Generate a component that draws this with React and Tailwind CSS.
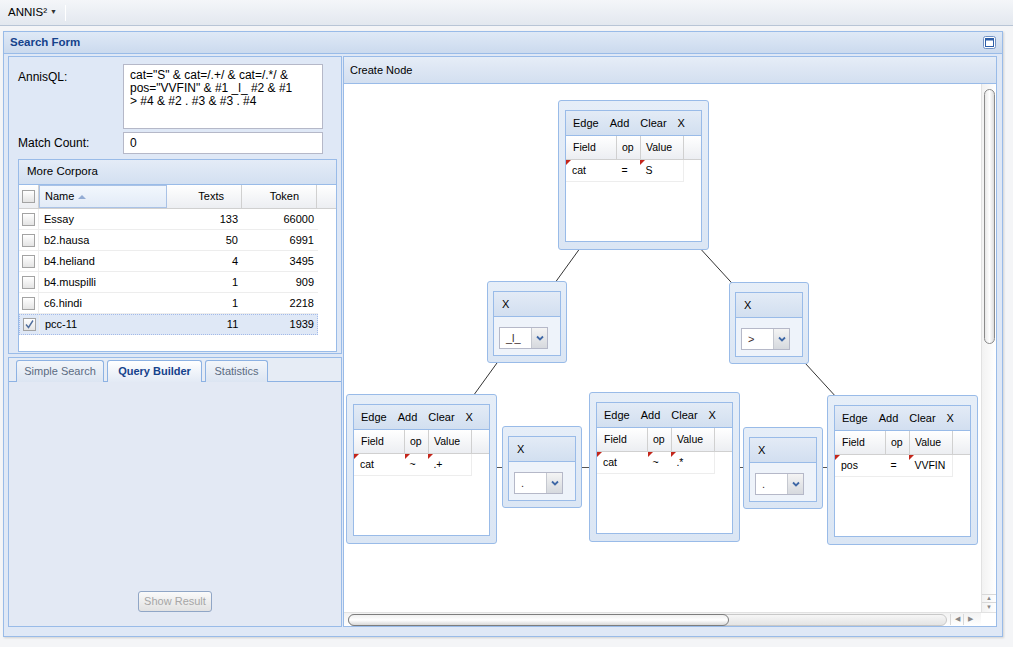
import React from 'react'

const corpora = [
  { name: 'Essay', texts: 133, token: 66000 },
  { name: 'b2.hausa', texts: 50, token: 6991 },
  { name: 'b4.heliand', texts: 4, token: 3495 },
  { name: 'b4.muspilli', texts: 1, token: 909 },
  { name: 'c6.hindi', texts: 1, token: 2218 },
  { name: 'pcc-11', texts: 11, token: 1939, checked: true },
]

const nodes = [
  { pos: 'left-[214px] top-[16px]', cells: [['cat', true], ['=', false], ['S', true]] },
  { pos: 'left-[2px] top-[310px]', cells: [['cat', true], ['~', true], ['.+', true]] },
  { pos: 'left-[245px] top-[308px]', cells: [['cat', true], ['~', true], ['.*', true]] },
  { pos: 'left-[483px] top-[311px]', cells: [['pos', true], ['=', false], ['VVFIN', true]] },
]

const edges = [
  { pos: 'left-[143px] top-[197px]', op: '_l_' },
  { pos: 'left-[385px] top-[198px]', op: '>' },
  { pos: 'left-[158px] top-[342px]', op: '.' },
  { pos: 'left-[399px] top-[343px]', op: '.' },
]

function Checkbox({ checked }) {
  return (
    <span className="w-[13px] h-[13px] border border-[#a3a3a3] bg-gradient-to-b from-white to-[#e4e4e4] flex items-center justify-center">
      {checked && (
        <svg width="9" height="9" viewBox="0 0 9 9">
          <path d="M1 4.5 L3.5 7.5 L8 0.5" stroke="#4f6d9c" strokeWidth="1.4" fill="none" />
        </svg>
      )}
    </span>
  )
}

function Dirty() {
  return <span className="absolute left-0 top-0 w-0 h-0 border-t-[5px] border-t-[#c4261b] border-r-[5px] border-r-transparent" />
}

function QueryNode({ pos, cells }) {
  const widths = ['w-[51px]', 'w-[24px]', 'w-[43px]']
  const pads = ['pl-[6px]', 'pl-[5px]', 'pl-[5px]']
  return (
    <div className={`absolute ${pos} w-[151px] h-[150px] rounded-[3px] border border-[#99bbe8] bg-gradient-to-b from-[#e6eef8] to-[#dbe6f4] pt-[9px] px-[6px] pb-[7px]`}>
      <div className="h-full border border-[#99bbe8] bg-white flex flex-col text-[11px]">
        <div className="h-[25px] shrink-0 border-b border-[#99bbe8] bg-gradient-to-b from-[#e3ebf6] to-[#d2dff0] flex items-center gap-[11px] pl-[7px]">
          <span>Edge</span>
          <span>Add</span>
          <span>Clear</span>
          <span>X</span>
        </div>
        <div className="h-[24px] shrink-0 flex border-b border-[#d0d0d0] bg-gradient-to-b from-white to-[#eceef2] text-[10.5px]">
          <div className="w-[51px] border-r border-[#d0d0d0] pl-[7px] flex items-center">Field</div>
          <div className="w-[24px] border-r border-[#d0d0d0] pl-[5px] flex items-center">op</div>
          <div className="w-[43px] border-r border-[#d0d0d0] pl-[5px] flex items-center">Value</div>
          <div className="flex-1" />
        </div>
        <div className="h-[22px] shrink-0 flex w-[118px] border-b border-r border-[#ededed] text-[10.5px]">
          {cells.map(([text, dirty], i) => (
            <div key={i} className={`relative ${widths[i]} ${pads[i]} flex items-center`}>
              {dirty && <Dirty />}
              {text}
            </div>
          ))}
        </div>
      </div>
    </div>
  )
}

function EdgeNode({ pos, op }) {
  return (
    <div className={`absolute ${pos} w-[80px] h-[82px] rounded-[3px] border border-[#99bbe8] bg-gradient-to-b from-[#e6eef8] to-[#dbe6f4] pt-[9px] pl-[5px] pr-[5px] pb-[6px]`}>
      <div className="h-full border border-[#99bbe8] flex flex-col bg-[#eef3fa]">
        <div className="h-[25px] shrink-0 border-b border-[#99bbe8] bg-gradient-to-b from-[#e3ebf6] to-[#d2dff0] flex items-center pl-[8px] text-[11px]">X</div>
        <div className="pt-[10px] pl-[5px]">
          <div className="flex w-[49px] h-[22px] border border-[#b5b8c8]">
            <div className="flex-1 bg-white text-[11px] pl-[6px] flex items-center text-[#3a2a2a]">{op}</div>
            <div className="w-[16px] border-l border-[#c5c8d0] bg-gradient-to-b from-[#f4f4f4] to-[#d6d9de] flex items-center justify-center">
              <svg width="8" height="6" viewBox="0 0 8 6">
                <path d="M1 1.5 L4 4.5 L7 1.5" stroke="#3f68a6" strokeWidth="1.8" fill="none" />
              </svg>
            </div>
          </div>
        </div>
      </div>
    </div>
  )
}

function SearchFormLeft() {
  return (
    <div className="w-[334px] flex flex-col">
      <div className="h-[298px] shrink-0 border border-[#99bbe8] bg-[#dfe8f6] pt-[7px] pl-[9px] pr-[4px] text-[12px]">
        <div className="flex">
          <div className="w-[105px] pt-[4px]">AnnisQL:</div>
          <div className="w-[200px] h-[65px] border border-[#b5b8c8] bg-white px-[6px] pt-[4px] leading-[13px] text-[12px]">
            <div>cat="S" &amp; cat=/.+/ &amp; cat=/.*/ &amp;</div>
            <div>pos="VVFIN" &amp; #1 _l_ #2 &amp; #1</div>
            <div>&gt; #4 &amp; #2 . #3 &amp; #3 . #4</div>
          </div>
        </div>
        <div className="flex mt-[3px]">
          <div className="w-[105px] flex items-center">Match Count:</div>
          <div className="w-[200px] h-[22px] border border-[#b5b8c8] bg-white px-[6px] flex items-center">0</div>
        </div>
        <div className="mt-[5px] h-[193px] border border-[#99bbe8] bg-white flex flex-col text-[11px]">
          <div className="h-[25px] shrink-0 border-b border-[#99bbe8] bg-gradient-to-b from-[#e4ecf7] to-[#d3e0f1] flex items-center pl-[8px] text-[11.5px]">More Corpora</div>
          <div className="h-[24px] shrink-0 flex border-b border-[#d0d0d0] bg-gradient-to-b from-white to-[#eceef2]">
            <div className="w-[20px] border-r border-[#d0d0d0] flex items-center justify-center">
              <Checkbox />
            </div>
            <div className="w-[128px] border border-[#a9c2e6] bg-gradient-to-b from-[#f2f7fd] to-[#e2ebf7] flex items-center pl-[5px] gap-[4px]">
              Name
              <svg width="8" height="5" viewBox="0 0 8 5"><path d="M0 5 L4 1 L8 5 Z" fill="#93acd4" /></svg>
            </div>
            <div className="w-[75px] border-r border-[#d0d0d0] flex items-center justify-end pr-[17px]">Texts</div>
            <div className="w-[75px] border-r border-[#d0d0d0] flex items-center justify-end pr-[17px]">Token</div>
            <div className="flex-1" />
          </div>
          {corpora.map((c) => (
            <div
              key={c.name}
              className={`h-[21px] w-[299px] flex ${c.checked ? 'bg-[#dfe8f6] border border-dotted border-[#a3bae9]' : 'border-b border-[#ededed]'}`}
            >
              <div className="w-[20px] border-r border-[#ededed] flex items-center justify-center">
                <Checkbox checked={c.checked} />
              </div>
              <div className="w-[128px] pl-[5px] flex items-center">{c.name}</div>
              <div className="w-[75px] pr-[4px] flex items-center justify-end">{c.texts}</div>
              <div className="w-[75px] pr-[3px] flex items-center justify-end">{c.token}</div>
            </div>
          ))}
        </div>
      </div>
      <div className="h-[3px] shrink-0" />
      <div className="flex-1 border border-[#99bbe8] flex flex-col">
        <div className="h-[24px] shrink-0 pt-[2px] pl-[7px] flex gap-[3px] border-b border-[#8db2e3] bg-[#e6ecf5] text-[11px]">
          <div className="w-[88px] h-[22px] rounded-t-[3px] border border-b-0 border-[#8db2e3] bg-gradient-to-b from-[#f3f6fa] to-[#dce5f2] flex items-center justify-center text-[#5b6b82]">Simple Search</div>
          <div className="w-[95px] h-[22px] rounded-t-[3px] border border-b-0 border-[#8db2e3] bg-gradient-to-b from-white to-[#e3eaf5] flex items-center justify-center font-bold text-[#15428b]">Query Builder</div>
          <div className="w-[63px] h-[22px] rounded-t-[3px] border border-b-0 border-[#8db2e3] bg-gradient-to-b from-[#f3f6fa] to-[#dce5f2] flex items-center justify-center text-[#5b6b82]">Statistics</div>
        </div>
        <div className="flex-1 bg-[#e3e9f4] flex items-end justify-center pb-[14px]">
          <div className="w-[74px] h-[21px] rounded-[3px] border border-[#90a6c6] bg-gradient-to-b from-[#fafafa] to-[#e2e2e2] flex items-center justify-center text-[11px] text-[#a6a6a6]">Show Result</div>
        </div>
      </div>
    </div>
  )
}

function Canvas() {
  return (
    <div className="flex-1 bg-white flex flex-col">
      <div className="flex-1 flex">
        <div className="flex-1 relative overflow-hidden">
          <svg className="absolute inset-0" width="637" height="529">
            <line x1="289" y1="91" x2="77" y2="384" stroke="#333" strokeWidth="1" />
            <line x1="289" y1="91" x2="558" y2="385" stroke="#333" strokeWidth="1" />
            <line x1="77" y1="383.5" x2="558" y2="383.5" stroke="#555" strokeWidth="1" />
          </svg>
          {edges.map((e, i) => <EdgeNode key={i} {...e} />)}
          {nodes.map((n, i) => <QueryNode key={i} {...n} />)}
        </div>
        <div className="w-[15px] border-l border-[#e2e2e2] bg-gradient-to-r from-[#f2f2f2] to-white flex flex-col items-center">
          <div className="mt-[5px] w-[11px] h-[255px] rounded-full border border-[#8a8a8a] bg-gradient-to-r from-[#e8e8e8] via-white to-[#dcdcdc]" />
          <div className="flex-1" />
          <div className="w-full border-t border-[#d8d8d8] h-[8px] flex items-center justify-center text-[6px] text-[#888]">▲</div>
          <div className="w-full border-t border-[#d8d8d8] h-[9px] flex items-center justify-center text-[6px] text-[#888] mb-[1px]">▼</div>
        </div>
      </div>
      <div className="h-[14px] flex border-t border-[#e2e2e2] bg-gradient-to-b from-[#f2f2f2] to-white">
        <div className="flex-1 flex items-center pl-[4px] relative">
          <div className="w-[599px] h-[12px] rounded-full border border-[#c8c8c8] bg-gradient-to-b from-[#f6f6f6] to-[#e4e4e4] relative">
            <div className="absolute -left-px -top-px w-[381px] h-[12px] rounded-full border border-[#7d7d7d] bg-gradient-to-b from-[#f0f0f0] via-white to-[#d9d9d9]" />
          </div>
          <div className="flex ml-[3px] text-[7px] text-[#888]">
            <span className="w-[13px] border-l border-[#d8d8d8] text-center">◀</span>
            <span className="w-[13px] border-l border-[#d8d8d8] text-center">▶</span>
          </div>
        </div>
        <div className="w-[15px] bg-white" />
      </div>
    </div>
  )
}

export default function App() {
  return (
    <div className="w-[1013px] h-[647px] overflow-hidden bg-[#f4f5f7] font-['Liberation_Sans',Arial,sans-serif] text-[12px] text-black">
      {/* top toolbar */}
      <div className="h-[26px] border-b border-[#b8c5d6] bg-gradient-to-b from-[#f4f6f9] to-[#e3e8ef] flex items-center pl-[8px]">
        <span className="text-[11.5px]">ANNIS²</span>
        <span className="ml-[3px] text-[7px] text-[#333]">▼</span>
        <span className="ml-[8px] w-px h-[16px] bg-[#c5cfdc] border-r border-white" />
      </div>

      <div className="pl-[3px] pt-[5px]">
        <div className="w-[1000px] h-[606px] border border-[#99bbe8] flex flex-col shadow-[1px_1px_2px_rgba(0,0,0,0.15)]">
          <div className="h-[22px] shrink-0 border-b border-[#99bbe8] bg-gradient-to-b from-[#dfe9f6] to-[#cbdaee] flex items-center justify-between pl-[6px] pr-[6px]">
            <span className="font-bold text-[11.5px] text-[#15428b]">Search Form</span>
            <svg width="13" height="13" viewBox="0 0 13 13">
              <rect x="0.5" y="0.5" width="12" height="12" rx="2" fill="#fff" stroke="#6f91c4" />
              <rect x="2.5" y="2.5" width="8" height="8" fill="#fff" stroke="#2d5ea8" />
              <rect x="2.5" y="2.5" width="8" height="2" fill="#2d5ea8" />
            </svg>
          </div>
          <div className="flex-1 bg-[#dfe8f6] pt-[2px] pl-[4px] pr-[5px] pb-[9px] flex gap-px">
            <SearchFormLeft />
            <div className="w-[654px] border border-[#99bbe8] flex flex-col">
              <div className="h-[27px] shrink-0 border-b border-[#99bbe8] bg-gradient-to-b from-[#e6edf7] to-[#d3dff0] flex items-center pl-[6px] text-[11px]">Create Node</div>
              <Canvas />
            </div>
          </div>
        </div>
      </div>
    </div>
  )
}
